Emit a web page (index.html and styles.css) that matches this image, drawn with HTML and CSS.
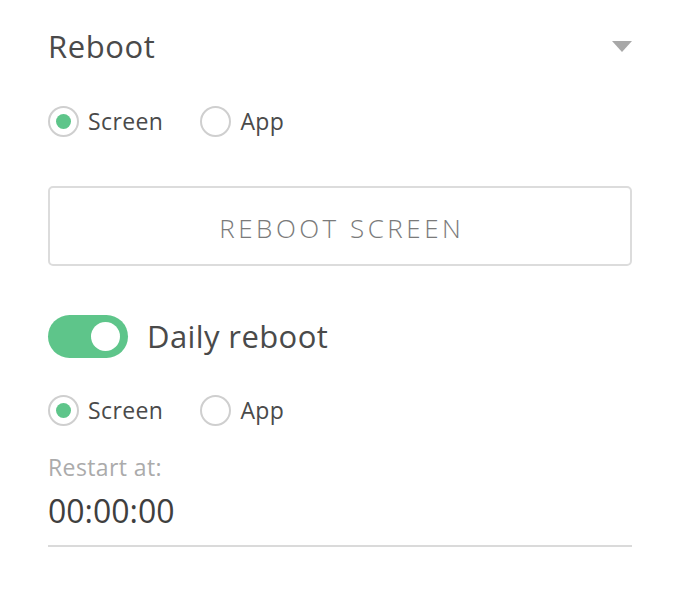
FILE: index.html
```html
<!DOCTYPE html>
<html>
<head>
<meta charset="utf-8">
<link rel="stylesheet" href="styles.css">
</head>
<body>
<div class="panel">
  <div class="header">
    <h1 class="title">Reboot</h1>
    <span class="caret"></span>
  </div>
  <div class="radios first">
    <label class="radio"><span class="dot checked"></span><span class="rlabel">Screen</span></label>
    <label class="radio"><span class="dot"></span><span class="rlabel">App</span></label>
  </div>
  <button class="btn">REBOOT SCREEN</button>
  <div class="toggle-row">
    <span class="toggle"><span class="knob"></span></span>
    <span class="toggle-label">Daily reboot</span>
  </div>
  <div class="radios second">
    <label class="radio"><span class="dot checked"></span><span class="rlabel">Screen</span></label>
    <label class="radio"><span class="dot"></span><span class="rlabel">App</span></label>
  </div>
  <div class="field">
    <div class="field-label">Restart at:</div>
    <div class="field-value">00:00:00</div>
  </div>
</div>
</body>
</html>
```
FILE: styles.css
```css
html, body {
  margin: 0;
  padding: 0;
  background: #fff;
}
body {
  font-family: "Open Sans", "Noto Sans", sans-serif;
  color: #4a4a4a;
}
.panel {
  width: 584px;
  padding: 24px 0 0 48px;
}
.header {
  display: flex;
  align-items: center;
  justify-content: space-between;
  height: 44px;
}
.title {
  margin: 0;
  font-size: 31px;
  font-weight: 400;
  letter-spacing: 0.6px;
  line-height: 44px;
  color: #4a4a4a;
}
.caret {
  width: 0;
  height: 0;
  border-left: 10px solid transparent;
  border-right: 10px solid transparent;
  border-top: 11px solid #a8a8a8;
}
.radios {
  display: flex;
  gap: 37px;
  height: 32px;
  align-items: center;
}
.radios.first { margin-top: 37px; }
.radios.second { margin-top: 36px; }
.radio {
  display: flex;
  align-items: center;
  gap: 9px;
}
.dot {
  box-sizing: border-box;
  width: 31px;
  height: 31px;
  border: 2px solid #cfcfcf;
  border-radius: 50%;
  display: flex;
  align-items: center;
  justify-content: center;
}
.dot.checked::after {
  content: "";
  width: 15px;
  height: 15px;
  border-radius: 50%;
  background: #5ec58a;
}
.rlabel {
  font-size: 23px;
  letter-spacing: 0.4px;
  color: #4a4a4a;
}
.btn {
  display: block;
  box-sizing: border-box;
  width: 584px;
  height: 80px;
  margin-top: 49px;
  background: #fff;
  border: 2px solid #dcdcdc;
  border-radius: 5px;
  font-family: "Open Sans", "Noto Sans", sans-serif;
  font-size: 26px;
  font-weight: 300;
  letter-spacing: 3.5px;
  text-indent: 3.5px;
  color: #7a7a7a;
  padding: 3px 0 0;
}
.toggle-row {
  display: flex;
  align-items: center;
  gap: 19px;
  margin-top: 48px;
  height: 44px;
}
.toggle {
  width: 80px;
  height: 43px;
  border-radius: 22px;
  background: #5ec58a;
  display: flex;
  align-items: center;
  justify-content: flex-end;
  padding-right: 8px;
  box-sizing: border-box;
}
.knob {
  width: 29px;
  height: 29px;
  border-radius: 50%;
  background: #fff;
}
.toggle-label {
  font-size: 31px;
  letter-spacing: 0.4px;
  color: #4a4a4a;
}
.field {
  margin-top: 25px;
  width: 584px;
  border-bottom: 2px solid #dadada;
  padding-bottom: 12px;
}
.field-label {
  font-size: 23px;
  letter-spacing: 0.4px;
  color: #ababab;
  line-height: 32px;
}
.field-value {
  font-size: 32px;
  color: #3f3f3f;
  line-height: 44px;
  margin-top: 6px;
}
```
